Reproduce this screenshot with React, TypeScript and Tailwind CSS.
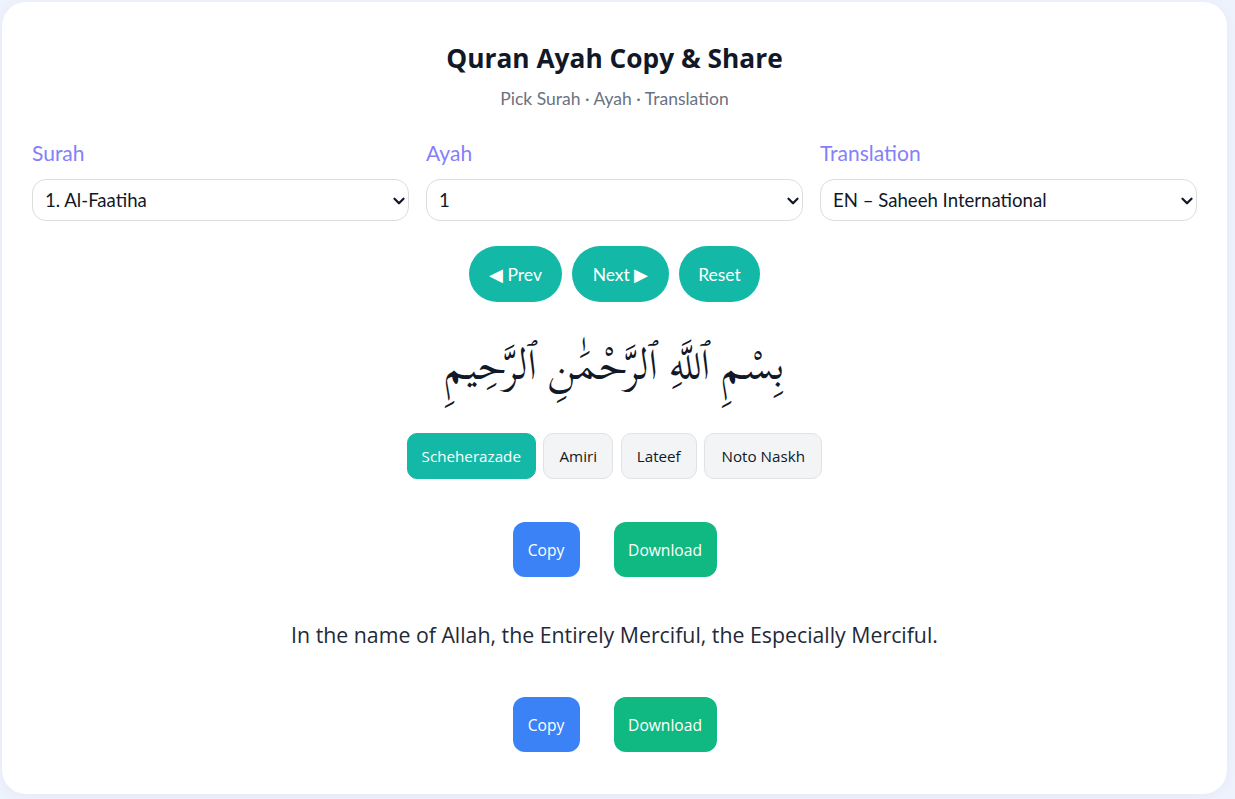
import { useState } from "react";
import { ChevronDown } from "lucide-react";

const fonts = [
  { name: "Scheherazade", width: "w-[129px]" },
  { name: "Amiri", width: "w-[70px]" },
  { name: "Lateef", width: "w-[76px]" },
  { name: "Noto Naskh", width: "w-[118px]" },
];
const uiFont = "font-['Open_Sans','Noto_Sans',sans-serif]";

function Field({ label, value }: { label: string; value: string }) {
  return (
    <div className="flex flex-col">
      <label className="text-[21px] leading-[28px] mb-[12px] text-[#8480fb] font-['Lato',sans-serif]">{label}</label>
      <div className="relative">
        <select
          defaultValue={value}
          className="block h-[42px] w-full appearance-none rounded-[14px] border border-[#dddddd] bg-white pl-[12px] pr-[24px] pt-[2px] text-[18.6px] text-[#111827] font-['Lato',sans-serif]"
        >
          <option>{value}</option>
        </select>
        <ChevronDown size={18} strokeWidth={3} className="pointer-events-none absolute right-[1.5px] top-[13px] text-[#111827]" />
      </div>
    </div>
  );
}

function ActionRow() {
  return (
    <div className="flex justify-center gap-[34px]">
      <button className="h-[55px] w-[67px] rounded-[12px] bg-[#3b82f6] pt-[2px] text-[15.6px] text-white">Copy</button>
      <button className="h-[55px] w-[103px] rounded-[12px] bg-[#10b981] pt-[2px] text-[15.6px] text-white">Download</button>
    </div>
  );
}

export default function App() {
  const [activeFont, setActiveFont] = useState("Scheherazade");

  return (
    <div className={`h-[799px] overflow-hidden bg-[#eef2fc] pt-[2px] pl-[2px] pr-[8px] ${uiFont}`}>
      <div className="h-[792px] rounded-[24px] bg-white px-[30px] pt-[38px] shadow-[0_2px_12px_rgba(99,102,241,0.06)]">
        {/* Header */}
        <h1 className="text-center text-[26.3px] leading-[36px] font-bold text-[#111827]">Quran Ayah Copy &amp; Share</h1>
        <p className="mt-[11px] text-center text-[17.5px] leading-[24px] text-[#6b7280] font-['Lato',sans-serif]">
          Pick Surah · Ayah · Translation
        </p>

        {/* Pickers */}
        <div className="mt-[28px] grid grid-cols-3 gap-[17px]">
          <Field label="Surah" value="1. Al-Faatiha" />
          <Field label="Ayah" value="1" />
          <Field label="Translation" value="EN – Saheeh International" />
        </div>

        {/* Nav */}
        <div className="mt-[25px] flex justify-center gap-[10px] font-['Lato',sans-serif] text-[17.5px] text-white">
          <button className="h-[56px] w-[93px] rounded-full bg-[#14b8a6] pt-[2px]">◀ Prev</button>
          <button className="h-[56px] w-[97px] rounded-full bg-[#14b8a6] pt-[2px]">Next ▶</button>
          <button className="h-[56px] w-[81px] rounded-full bg-[#14b8a6] pt-[2px]">Reset</button>
        </div>

        {/* Ayah */}
        <div
          dir="rtl"
          className="mt-[22px] h-[109px] text-center text-[42.4px] leading-[84px] text-[#111827] font-['Scheherazade_New','Amiri','Noto_Naskh_Arabic','DejaVu_Sans',serif]"
        >
          بِسْمِ ٱللَّهِ ٱلرَّحْمَٰنِ ٱلرَّحِيمِ
        </div>

        {/* Font choice */}
        <div className="flex justify-center gap-[7.5px]">
          {fonts.map((f) => (
            <button
              key={f.name}
              onClick={() => setActiveFont(f.name)}
              className={`h-[46px] rounded-[10px] border text-[15.2px] ${f.width} ${
                activeFont === f.name
                  ? "border-[#14b8a6] bg-[#14b8a6] text-white"
                  : "border-[#e0e2e6] bg-[#f3f4f6] text-[#111827]"
              }`}
            >
              {f.name}
            </button>
          ))}
        </div>

        <div className="mt-[43px]">
          <ActionRow />
        </div>

        <p className="mt-[40px] text-center text-[21.3px] leading-[36px] text-[#1f2937]">
          In the name of Allah, the Entirely Merciful, the Especially Merciful.
        </p>

        <div className="mt-[44px]">
          <ActionRow />
        </div>
      </div>
    </div>
  );
}
